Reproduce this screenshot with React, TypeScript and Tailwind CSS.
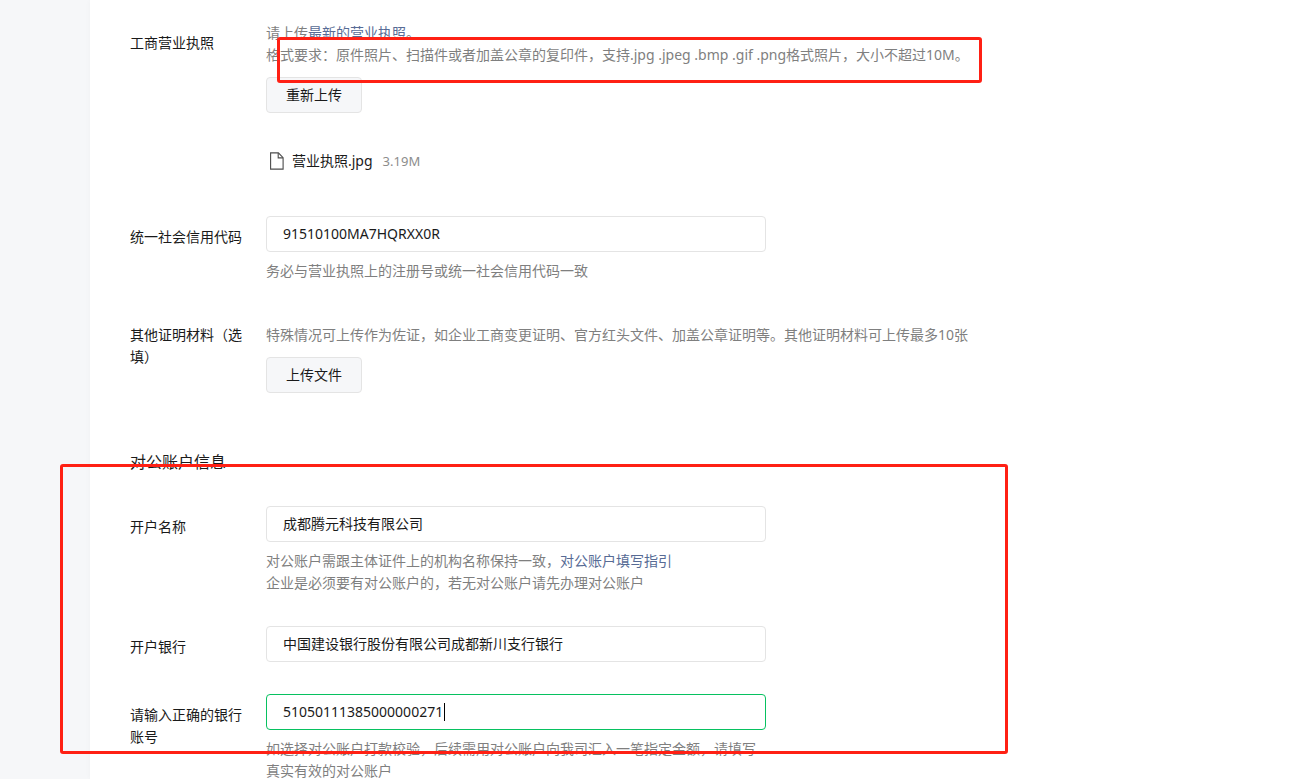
import type { ReactNode } from "react";

type FieldProps = {
  label: string;
  htmlFor: string;
  labelClassName?: string;
  children: ReactNode;
};

const Field = ({ label, htmlFor, labelClassName = "pt-[10px]", children }: FieldProps) => (
  <div className="flex items-start gap-6">
    <label
      htmlFor={htmlFor}
      className={`w-28 shrink-0 leading-[22px] ${labelClassName}`}
    >
      {label}
    </label>
    <div className="min-w-0 flex-1">{children}</div>
  </div>
);

type TextInputProps = {
  id: string;
  value: string;
  active?: boolean;
};

const TextInput = ({ id, value, active = false }: TextInputProps) => (
  <div className="relative w-full max-w-[500px]">
    <input
      id={id}
      type="text"
      defaultValue={value}
      className={`block h-9 w-full rounded border bg-white px-4 pb-0.5 text-[#1a1a1a] outline-none ${
        active ? "border-[#07c160]" : "border-[#e4e4e4]"
      }`}
    />
    {/* 光标 */}
    {active && (
      <span className="pointer-events-none absolute inset-y-0 left-[178px] my-auto h-[18px] w-px bg-black" />
    )}
  </div>
);

const Help = ({ children }: { children: ReactNode }) => (
  <p className="mt-2 leading-[22px] text-[#7f7f7f]">{children}</p>
);

const UploadButton = ({ id, children }: { id: string; children: ReactNode }) => (
  <button
    id={id}
    type="button"
    className="mt-[11px] block h-9 w-24 cursor-pointer rounded border border-[#e4e4e4] bg-[#f6f7f9] text-[#1a1a1a]"
  >
    {children}
  </button>
);

const FileIcon = () => (
  <svg
    width="14"
    height="18"
    viewBox="0 0 14 18"
    fill="none"
    stroke="#4c4c4c"
    strokeWidth="1.1"
    aria-hidden="true"
  >
    <path d="M0.6 0.9H8.4L13.1 5.7V17.1H0.6Z" />
    <path d="M8.2 1V5.9H13" />
  </svg>
);

export default function App() {
  return (
    <div className="relative flex h-screen overflow-hidden bg-[#f6f7f9] pl-[90px] font-['Noto_Sans','Noto_Sans_CJK_SC',sans-serif] text-sm text-[#1a1a1a]">
      <main className="min-w-0 flex-1 bg-white pl-10 pt-[22px] shadow-[0_0_6px_rgba(0,0,0,0.03)]">
        <form>
          {/* 营业执照 */}
          <Field label="工商营业执照" htmlFor="license">
            <p className="leading-[22px] text-[#7f7f7f]">
              请上传
              <a href="#license" className="text-[#576b95]">
                最新的营业执照
              </a>
              。
              <br />
              格式要求：原件照片、扫描件或者加盖公章的复印件，支持.jpg .jpeg .bmp .gif
              .png格式照片，大小不超过10M。
            </p>
            <UploadButton id="license">重新上传</UploadButton>
            <div className="ml-1 mt-[37px] flex h-[22px] items-center">
              <FileIcon />
              <span className="ml-2">营业执照.jpg</span>
              <span className="ml-[10px] text-[13px] text-[#8c8c8c]">3.19M</span>
            </div>
          </Field>

          <div className="mt-11">
            <Field label="统一社会信用代码" htmlFor="credit-code">
              <TextInput id="credit-code" value="91510100MA7HQRXX0R" />
              <Help>务必与营业执照上的注册号或统一社会信用代码一致</Help>
            </Field>
          </div>

          {/* 其他材料 */}
          <div className="mt-[42px]">
            <Field
              label="其他证明材料（选填）"
              htmlFor="materials"
              labelClassName="pt-0"
            >
              <p className="leading-[22px] text-[#7f7f7f]">
                特殊情况可上传作为佐证，如企业工商变更证明、官方红头文件、加盖公章证明等。其他证明材料可上传最多10张
              </p>
              <UploadButton id="materials">上传文件</UploadButton>
            </Field>
          </div>

          {/* 对公账户 */}
          <h2 className="mt-[57px] text-base leading-6">对公账户信息</h2>

          <div className="mt-8 flex flex-col gap-8">
            <Field label="开户名称" htmlFor="account-name">
              <TextInput id="account-name" value="成都腾元科技有限公司" />
              <Help>
                对公账户需跟主体证件上的机构名称保持一致，
                <a href="#guide" className="text-[#576b95]">
                  对公账户填写指引
                </a>
                <br />
                企业是必须要有对公账户的，若无对公账户请先办理对公账户
              </Help>
            </Field>
            <Field label="开户银行" htmlFor="bank">
              <TextInput id="bank" value="中国建设银行股份有限公司成都新川支行银行" />
            </Field>
            <Field label="请输入正确的银行账号" htmlFor="account-number">
              <TextInput id="account-number" value="51050111385000000271" active />
              <div className="max-w-[500px]">
                <Help>
                  如选择对公账户打款校验，后续需用对公账户向我司汇入一笔指定金额，请填写真实有效的对公账户
                </Help>
              </div>
            </Field>
          </div>
        </form>
      </main>

      {/* 标注框 */}
      <div className="pointer-events-none absolute left-[277px] top-[37px] h-[46px] w-[705px] rounded-[3px] border-3 border-[#ff2014]" />
      <div className="pointer-events-none absolute left-[60px] top-[464px] h-[290px] w-[948px] rounded-[3px] border-3 border-[#ff2014]" />
    </div>
  );
}
